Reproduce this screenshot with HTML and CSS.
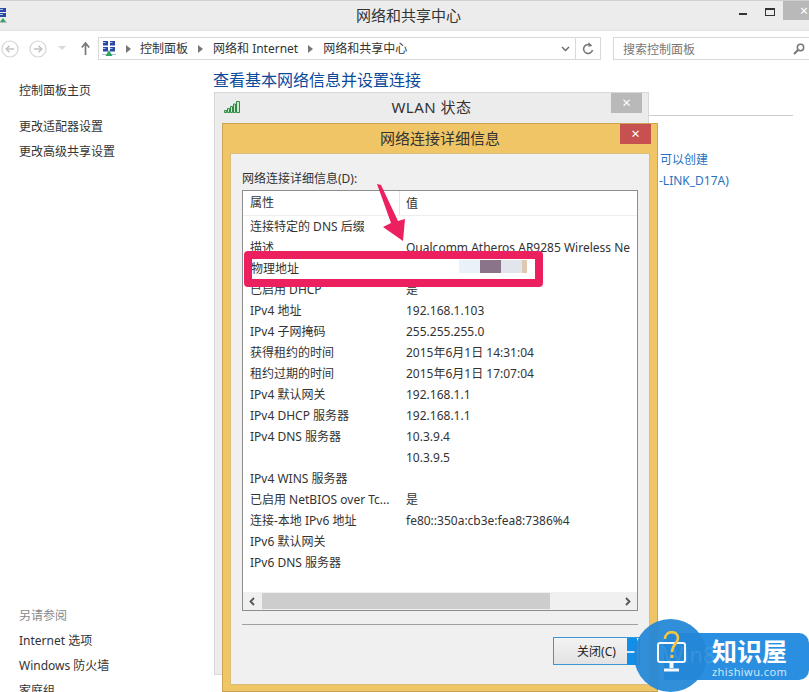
FILE: index.html
```html
<!DOCTYPE html>
<html lang="zh">
<head>
<meta charset="utf-8">
<title>网络和共享中心</title>
<link rel="stylesheet" href="styles.css">
</head>
<body>
<div class="desktop">
  <div class="main-window">
    <header class="titlebar">
      <svg class="app-icon" width="7" height="16" viewBox="0 0 7 16"><path d="M0 0h6v4H0zM0 5h6v4H0z" fill="#2b4aa6"/><path d="M0 1h3v1H0zM0 6h3v1H0z" fill="#a9c0e6"/><path d="M3 10 0 14h6z" fill="#2fa565"/><path d="M0 14h7v1H0z" fill="#bbb"/></svg>
      <span class="title-text">网络和共享中心</span>
      <div class="win-controls">
        <span class="ctl-min"></span>
        <span class="ctl-max"></span>
        <span class="ctl-close">×</span>
      </div>
    </header>
    <nav class="toolbar">
      <div class="nav-buttons">
        <svg width="18" height="18" viewBox="0 0 18 18"><circle cx="9" cy="9" r="8" fill="none" stroke="#d4d4d4" stroke-width="1.2"/><path d="M13 9H5.500M8.500 5.800 5.200 9l3.300 3.200" fill="none" stroke="#c4c4c4" stroke-width="1.600"/></svg>
        <svg class="nav-fwd" width="18" height="18" viewBox="0 0 18 18"><circle cx="9" cy="9" r="8" fill="none" stroke="#d4d4d4" stroke-width="1.2"/><path d="M5 9h7.500M9.500 5.800 12.800 9l-3.300 3.200" fill="none" stroke="#c4c4c4" stroke-width="1.600"/></svg>
        <svg class="nav-drop" width="8" height="5" viewBox="0 0 8 5"><path d="M0 0h8L4 4z" fill="#d8d8d8"/></svg>
        <svg class="nav-up" width="9" height="13" viewBox="0 0 9 13"><path d="M4.500 13V2M.8 5.500 4.500 1l3.700 4.500" fill="none" stroke="#777" stroke-width="1.700"/></svg>
      </div>
      <div class="address">
        <svg class="crumb-icon" width="14" height="16" viewBox="0 0 14 16"><path d="M1 0h5v4.500H1zM8 0h5v4.500H8zM1 6h5v4.500H1zM8 6h5v4.500H8z" fill="#2b4aa6"/><path d="M1 1h2.500v1H1zM8 1h2.500v1H8zM1 7h2.500v1H1zM8 7h2.500v1H8zM0 13h14v1H0z" fill="#a9c0e6"/><path d="M7 9 3.500 15h7z" fill="#2fa565"/></svg>
        <span class="sep"></span><span class="crumb">控制面板</span>
        <span class="sep"></span><span class="crumb">网络和 Internet</span>
        <span class="sep"></span><span class="crumb">网络和共享中心</span>
        <svg class="addr-chevron" width="9" height="6" viewBox="0 0 9 6"><path d="M1 1l3.500 3.500L8 1" fill="none" stroke="#666" stroke-width="1.400"/></svg>
        <span class="addr-refresh"><svg width="12" height="13" viewBox="0 0 12 13"><path d="M9.500 4A4.500 4.500 0 1 0 10.500 8" fill="none" stroke="#777" stroke-width="1.500"/><path d="M6.500 0v5l3.500-1.500z" fill="#777"/></svg></span>
      </div>
      <div class="search">
        <span>搜索控制面板</span>
        <svg width="12" height="12" viewBox="0 0 12 12"><circle cx="7.500" cy="4.500" r="3.200" fill="none" stroke="#777" stroke-width="1.500"/><path d="M5 7 1 11" stroke="#777" stroke-width="2"/></svg>
      </div>
    </nav>
    <div class="content">
      <aside class="sidebar">
        <div class="side-links">
          <a class="side-home">控制面板主页</a>
          <a class="side-item">更改适配器设置</a>
          <a class="side-item">更改高级共享设置</a>
        </div>
        <div class="side-bottom">
          <span class="see-also">另请参阅</span>
          <a class="side-item">Internet 选项</a>
          <a class="side-item">Windows 防火墙</a>
          <a class="side-item">家庭组</a>
        </div>
      </aside>
      <main class="main-pane">
        <h1>查看基本网络信息并设置连接</h1>
      </main>
    </div>
    <hr class="behind-rule">
    <a class="behind-link l1">可以创建</a>
    <a class="behind-link l2">-LINK_D17A)</a>
  </div>

  <section class="wlan-window">
    <div class="wlan-title">
      <svg class="signal" width="16" height="12" viewBox="0 0 16 12"><path d="M.5 9.500h2v2h-2zM3.500 7.500h2v4h-2zM6.500 5.500h2v6h-2zM9.500 3h2v8.500h-2zM12.500.5h3v11h-3z" fill="#cfe8d0" stroke="#2f8a45"/></svg>
      <span class="wlan-text">WLAN 状态</span>
      <span class="wlan-close">×</span>
    </div>
  </section>

  <section class="detail-window">
    <div class="detail-title">
      <span>网络连接详细信息</span>
      <span class="detail-close">×</span>
    </div>
    <div class="detail-body">
      <label class="list-label">网络连接详细信息(D):</label>
      <div class="listbox">
        <div class="list-head"><span class="col-a">属性</span><span class="col-b">值</span></div>
        <div class="rows">
          <div class="row"><span class="col-a">连接特定的 DNS 后缀</span><span class="col-b"></span></div>
          <div class="row"><span class="col-a">描述</span><span class="col-b">Qualcomm Atheros AR9285 Wireless Ne</span></div>
          <div class="row"></div>
          <div class="row"><span class="col-a">已启用 DHCP</span><span class="col-b">是</span></div>
          <div class="row"><span class="col-a">IPv4 地址</span><span class="col-b">192.168.1.103</span></div>
          <div class="row"><span class="col-a">IPv4 子网掩码</span><span class="col-b">255.255.255.0</span></div>
          <div class="row"><span class="col-a">获得租约的时间</span><span class="col-b">2015年6月1日 14:31:04</span></div>
          <div class="row"><span class="col-a">租约过期的时间</span><span class="col-b">2015年6月1日 17:07:04</span></div>
          <div class="row"><span class="col-a">IPv4 默认网关</span><span class="col-b">192.168.1.1</span></div>
          <div class="row"><span class="col-a">IPv4 DHCP 服务器</span><span class="col-b">192.168.1.1</span></div>
          <div class="row"><span class="col-a">IPv4 DNS 服务器</span><span class="col-b">10.3.9.4</span></div>
          <div class="row"><span class="col-a"></span><span class="col-b">10.3.9.5</span></div>
          <div class="row"><span class="col-a">IPv4 WINS 服务器</span><span class="col-b"></span></div>
          <div class="row"><span class="col-a">已启用 NetBIOS over Tc...</span><span class="col-b">是</span></div>
          <div class="row"><span class="col-a">连接-本地 IPv6 地址</span><span class="col-b">fe80::350a:cb3e:fea8:7386%4</span></div>
          <div class="row"><span class="col-a">IPv6 默认网关</span><span class="col-b"></span></div>
          <div class="row"><span class="col-a">IPv6 DNS 服务器</span><span class="col-b"></span></div>
        </div>
        <div class="hscroll">
          <svg width="6" height="9" viewBox="0 0 6 9"><path d="M5 1 1.500 4.500 5 8" fill="none" stroke="#555" stroke-width="1.800"/></svg>
          <div class="thumb"></div>
          <svg width="6" height="9" viewBox="0 0 6 9"><path d="M1 1l3.500 3.500L1 8" fill="none" stroke="#555" stroke-width="1.800"/></svg>
        </div>
      </div>
      <div class="detail-rule"></div>
      <div class="detail-actions"><button class="close-btn">关闭(C)</button></div>
    </div>
  </section>

  <div class="highlight-box">
    <span class="hl-label">物理地址</span>
    <div class="hl-mosaic"><i class="m1"></i><i class="m2"></i><i class="m3"></i><i class="m4"></i></div>
  </div>
  <svg class="arrow" width="32" height="60" viewBox="0 0 32 60"><path d="M1 1 5 2 22 38 29 36 27 58 7 44 15 40z" fill="#ec1f5f"/></svg>

  <div class="watermark">
    <div class="wm-tab"></div>
    <div class="wm-bar"></div>
    <div class="wm-circle">
      <span class="wm-ghost">Win8</span>
      <svg class="wm-icon" width="34" height="42" viewBox="0 0 34 42"><rect x="4" y="12" width="27" height="19" rx="2" fill="none" stroke="#f2f8fd" stroke-width="2"/><path d="M17.500 31v6" stroke="#f2f8fd" stroke-width="4"/><path d="M10 39h15" stroke="#f2f8fd" stroke-width="3"/><path d="M11 8c0-9 13-9 13-1 0 6-6 6-6 14" fill="none" stroke="#f5c542" stroke-width="2.600"/><path d="M16.500 24h3v3h-3z" fill="#f5c542"/></svg>
    </div>
    <div class="wm-text">
      <span class="wm-cn">知识屋</span>
      <span class="wm-en">zhishiwu.com</span>
    </div>
  </div>
</div>
</body>
</html>
```

FILE: styles.css
```css
* { box-sizing: border-box; }
html, body { margin: 0; padding: 0; background: #fff; }
body { font-family: "Noto Sans", "Noto Sans CJK SC", sans-serif; color: #222; }
.desktop { position: relative; width: 809px; height: 692px; overflow: hidden; background: #fff; }
.main-window { position: relative; width: 809px; height: 692px; display: flex; flex-direction: column; }

.titlebar { height: 31px; background: #ececec; border-top: 1px solid #d0d0d0; border-bottom: 1px solid #e2e2e2; padding: 0 0 2px 8px; display: flex; align-items: center; justify-content: center; position: relative; flex: none; }
.app-icon { position: absolute; left: 0; top: 7px; }
.title-text { font-size: 15px; line-height: 20px; color: #333; }
.win-controls { position: absolute; right: 0; top: 0; display: flex; align-items: flex-start; }
.ctl-min { width: 8px; height: 2px; background: #333; margin: 12px 18px 0 0; }
.ctl-max { width: 10px; height: 8px; border: 1px solid #333; border-top-width: 2px; margin: 7px 8px 0 0; }
.ctl-close { width: 26px; height: 19px; background: #b9b9b9; color: #fff; font-size: 14px; line-height: 19px; padding-left: 17px; }

.toolbar { height: 34px; display: flex; align-items: center; flex: none; padding-top: 1px; }
.nav-buttons { width: 98px; display: flex; align-items: center; padding-left: 1px; flex: none; }
.nav-fwd { margin-left: 10px; }
.nav-drop { margin-left: 11px; }
.nav-up { margin-left: 15px; }
.address { width: 503px; height: 23px; border: 1px solid #d9d9d9; display: flex; align-items: center; font-size: 12px; color: #333; flex: none; position: relative; padding-left: 3px; }
.crumb-icon { flex: none; }
.sep { width: 0; height: 0; border-left: 5px solid #777; border-top: 4px solid transparent; border-bottom: 4px solid transparent; margin: 0 10px; flex: none; }
.crumb-icon + .sep { margin-left: 10px; margin-right: 9px; }
.crumb { white-space: nowrap; line-height: 17px; }
.addr-chevron { position: absolute; right: 30px; top: 8px; }
.addr-refresh { position: absolute; right: 0; top: 0; width: 25px; height: 21px; border-left: 1px solid #d9d9d9; display: flex; align-items: center; justify-content: center; }
.search { margin-left: 12px; width: 196px; height: 23px; border: 1px solid #d9d9d9; border-right: none; display: flex; align-items: center; justify-content: space-between; font-size: 12px; color: #777; padding: 0 0 0 9px; flex: none; }
.search svg { margin-right: 4px; }

.content { flex: 1; display: flex; min-height: 0; }
.sidebar { width: 213px; padding: 17px 0 0 19px; display: flex; flex-direction: column; justify-content: space-between; flex: none; font-size: 12px; }
.side-links { display: flex; flex-direction: column; }
.side-home { line-height: 17px; color: #333; margin-bottom: 19px; }
.side-item { line-height: 17px; color: #333; margin-bottom: 8px; }
.side-bottom { display: flex; flex-direction: column; margin-bottom: -15px; }
.see-also { color: #888; line-height: 17px; margin-bottom: 8px; }
.main-pane { flex: 1; }
h1 { margin: 4px 0 0; font-size: 16px; font-weight: 400; line-height: 22px; color: #0a4a9c; }

.behind-rule { position: absolute; left: 640px; top: 115px; width: 153px; margin: 0; border: 0; border-top: 1px solid #ccc; }
.behind-link { position: absolute; font-size: 12px; color: #2a72c0; line-height: 17px; }
.l1 { left: 660px; top: 151px; }
.l2 { left: 659px; top: 172px; }

.wlan-window { position: absolute; left: 214px; top: 92px; width: 435px; height: 583px; background: #ececec; border: 1px solid #d8d8d8; }
.wlan-title { height: 30px; padding-bottom: 3px; position: relative; display: flex; align-items: center; justify-content: center; font-size: 15px; line-height: 20px; color: #333; }
.wlan-text { letter-spacing: .5px; }
.signal { position: absolute; left: 9px; top: 8px; }
.wlan-close { position: absolute; right: 6px; top: 0; width: 31px; height: 20px; background: #b9b9b9; color: #fff; text-align: center; line-height: 19px; font-size: 15px; }

.detail-window { position: absolute; left: 222px; top: 123px; width: 436px; height: 569px; background: #f0c566; border: 1px solid #c9a553; display: flex; flex-direction: column; }
.detail-title { height: 29px; padding-bottom: 2px; flex: none; position: relative; display: flex; align-items: center; justify-content: center; font-size: 15px; line-height: 20px; color: #333; }
.detail-close { position: absolute; right: 6px; top: 0; width: 31px; height: 20px; background: #c75050; color: #fff; text-align: center; line-height: 19px; font-size: 15px; }
.detail-body { margin: 0 7px; height: 532px; background: #f0f0f0; border: 1px solid #d8bc7a; padding: 16px 11px 0; display: flex; flex-direction: column; flex: none; }
.list-label { font-size: 12px; line-height: 17px; color: #333; margin-bottom: 3px; }
.listbox { height: 421px; width: 396px; background: #fff; border: 1px solid #8d8d8d; display: flex; flex-direction: column; flex: none; overflow: hidden; }
.list-head { height: 25px; flex: none; display: flex; align-items: center; border-bottom: 1px solid #eee; font-size: 12px; color: #333; line-height: 17px; }
.list-head .col-a { border-right: 1px solid #e5e5e5; height: 100%; line-height: 24px; }
.rows { flex: 1; font-size: 12px; color: #333; }
.row { height: 21px; display: flex; align-items: center; white-space: nowrap; line-height: 17px; }
.col-a { width: 157px; padding-left: 7px; flex: none; overflow: hidden; }
.col-b { padding-left: 6px; }
.hscroll { height: 18px; background: #f0f0f0; display: flex; align-items: center; padding: 0 6px; flex: none; }
.thumb { width: 288px; height: 16px; background: #cdcdcd; margin: 0 auto 0 7px; }
.detail-rule { height: 1px; background: #a0a0a0; margin-top: 13px; width: 396px; flex: none; }
.detail-actions { display: flex; justify-content: flex-end; margin-top: 12px; margin-right: -2px; }
.close-btn { width: 87px; height: 28px; border: 1px solid #3c96d6; background: linear-gradient(#f3f3f3, #e3e3e3); font: 12px "Noto Sans", "Noto Sans CJK SC", sans-serif; color: #222; padding: 0; text-align: center; }

.highlight-box { position: absolute; left: 244px; top: 251px; width: 299px; height: 36px; border: 8px solid #ec1f5f; border-radius: 4px; background: #fff; display: flex; align-items: center; font-size: 12px; line-height: 17px; color: #333; }
.hl-label { margin: -2px 0 0 -1px; }
.hl-mosaic { position: absolute; left: 207px; top: 1px; display: flex; height: 13px; }
.hl-mosaic i { display: block; height: 13px; }
.m1 { width: 21px; background: #e8f2f8; }
.m2 { width: 21px; background: #8a7489; }
.m3 { width: 21px; background: #e2e6ec; }
.m4 { width: 5px; background: #dfc8b2; }
.arrow { position: absolute; left: 376px; top: 183px; }

.watermark { position: absolute; left: 634px; top: 619px; width: 175px; height: 73px; color: #fff; }
.wm-tab { position: absolute; left: -7px; top: 19px; width: 10px; height: 27px; background: linear-gradient(#0f8fe8 0 48%, #cfe6f8 48% 54%, #0f8fe8 54%); }
.wm-bar { position: absolute; left: 30px; top: 14px; width: 145px; height: 47px; background: #2a8fe0; border-radius: 0 10px 10px 0; }
.wm-circle { position: absolute; left: 0; top: 0; width: 73px; height: 73px; border-radius: 50%; background: rgba(36, 135, 215, .94); padding: 12px 0 0 20px; }
.wm-ghost { position: absolute; left: 29px; top: 21px; font-size: 22px; line-height: 28px; color: rgba(255, 255, 255, .1); }
.wm-icon { position: relative; display: block; }
.wm-text { position: absolute; left: 78px; top: 17px; display: flex; flex-direction: column; align-items: flex-start; }
.wm-cn { font-size: 25px; line-height: 30px; font-weight: 700; }
.wm-en { font-size: 11px; line-height: 12px; letter-spacing: .4px; color: #cfe6f8; }
```
